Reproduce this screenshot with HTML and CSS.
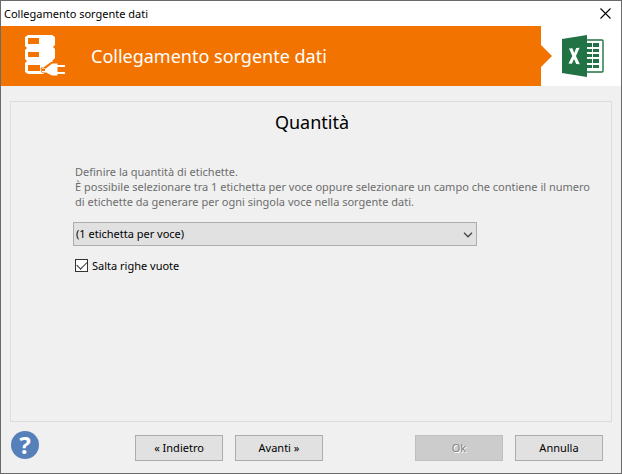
FILE: index.html
```
<!DOCTYPE html>
<html lang="it">
<head>
  <meta charset="UTF-8">
  <meta name="viewport" content="width=device-width, initial-scale=1.0">
  <title>Collegamento sorgente dati</title>
  <link rel="stylesheet" href="styles.css">
</head>
<body>

  <div class="window">
    <div class="titlebar">
      <span class="titlebar-text">Collegamento sorgente dati</span>
      <button class="close-button" type="button" aria-label="Chiudi">
        <svg width="11" height="11" viewBox="0 0 11 11">
          <path d="M0.5 0.5L10.5 10.5M10.5 0.5L0.5 10.5" stroke="#000" stroke-width="1.1" fill="none"/>
        </svg>
      </button>
    </div>

    <header class="banner">
      <div class="banner-title">
        <!-- database with plug -->
        <svg class="database-icon" width="42" height="44" viewBox="0 0 42 44">
          <path fill="#fff" d="M4 1H28L31 3V11L29 13L31 15V24L28 27L29 28H27L20 33V40H4L1 38V29L3 27L1 25V16L3 14L1 12V3Z"/>
          <path fill="#f27300" d="M4 4H15V10H4ZM4 18H15V23H4ZM4 31H16V37H4Z"/>
          <path fill="#fff" stroke="#f27300" stroke-width="1" d="M17 34H22L28 29H34V42H28L22 39H19Q17 39 17 34Z"/>
          <path fill="#f27300" d="M18 35H21V37H18Z"/>
          <path fill="#fff" d="M33 31H41V33H33ZM33 38H41V40H33Z"/>
        </svg>
        <h1>Collegamento sorgente dati</h1>
      </div>
      <div class="banner-source">
        <!-- Excel -->
        <svg width="42" height="42" viewBox="0 0 42 42">
          <rect x="22" y="5" width="19" height="32" rx="1" fill="#fff" stroke="#217346" stroke-width="1.4"/>
          <path fill="#217346" d="M25 8H30V12H25ZM31 8H37V12H31ZM25 14H30V17H25ZM31 14H37V17H31ZM25 19H30V22H25ZM31 19H37V22H31ZM25 24H30V28H25ZM31 24H37V28H31ZM25 30H30V33H25ZM31 30H37V33H31Z"/>
          <path fill="#217346" d="M0 4L25 0V42L0 38Z"/>
          <path fill="#fff" d="M7 13.5L10.4 13.3L12.2 18L14.2 13L17.6 12.8L14 21L17.8 29.3L14.2 29L12 24L9.9 28.7L6.5 28.5L10.3 21Z"/>
        </svg>
      </div>
    </header>

    <main class="panel">
      <h2>Quantità</h2>
      <p class="description">Definire la quantità di etichette.<br>
        È possibile selezionare tra 1 etichetta per voce oppure selezionare un campo che contiene il numero di etichette da generare per ogni singola voce nella sorgente dati.</p>
      <div class="select-box">
        <select id="quantity" aria-label="Quantità">
          <option>(1 etichetta per voce)</option>
        </select>
        <svg class="select-arrow" width="10" height="6" viewBox="0 0 10 6">
          <path d="M1 0.8L5 4.8L9 0.8" stroke="#444" stroke-width="1.3" fill="none"/>
        </svg>
      </div>
      <div class="check-row">
        <input type="checkbox" id="skipEmpty" checked>
        <label for="skipEmpty">Salta righe vuote</label>
      </div>
    </main>

    <footer class="footer">
      <button class="help-button" type="button" aria-label="Aiuto">?</button>
      <div class="button-group">
        <button class="btn" type="button">« Indietro</button>
        <button class="btn" type="button">Avanti »</button>
      </div>
      <div class="button-group">
        <button class="btn" type="button" disabled>Ok</button>
        <button class="btn" type="button">Annulla</button>
      </div>
    </footer>
  </div>

</body>
</html>
```

FILE: styles.css
```
* {
  box-sizing: border-box;
}

body {
  margin: 0;
  font-family: "Segoe UI", "Noto Sans", sans-serif;
  font-size: 11px;
  line-height: 15px;
  color: #000;
}

button, select, input {
  font: inherit;
  color: inherit;
}

.window {
  display: flex;
  flex-direction: column;
  min-height: 100vh;
  border: 1px solid #6b6a6b;
  background-color: #f0f0f0;
}

.titlebar {
  display: flex;
  justify-content: space-between;
  align-items: center;
  height: 25px;
  padding-left: 3px;
  background-color: #fff;
}

.close-button {
  display: flex;
  padding: 7px 10px;
  border: none;
  background: none;
}

.banner {
  display: flex;
  height: 60px;
  background-color: #fff;
}

.banner-title {
  position: relative;
  flex: 1;
  display: flex;
  align-items: center;
  gap: 25px;
  padding-left: 23px;
  background-color: #f27300;
}

.banner-title::after {
  content: "";
  position: absolute;
  left: 100%;
  top: 19px;
  border: 11px solid transparent;
  border-left-color: #f27300;
  border-right-width: 0;
}

.banner-title h1 {
  margin: 0;
  font-size: 18px;
  font-weight: 400;
  line-height: 24px;
  color: #fff;
}

.banner-source {
  display: flex;
  align-items: center;
  justify-content: flex-end;
  width: 80px;
  padding-right: 17px;
}

.panel {
  flex: 1;
  margin: 15px 9px 0;
  padding: 7px 12px 12px 62px;
  border: 1px solid #dcdcdc;
}

.panel h2 {
  margin: 0 0 29px -48px;
  font-size: 18px;
  font-weight: 400;
  line-height: 26px;
  text-align: center;
}

.description {
  margin: 0 0 13px;
  padding-left: 2px;
  color: #6d6d6d;
}

.select-box {
  position: relative;
  max-width: 404px;
}

.select-box select {
  appearance: none;
  width: 100%;
  height: 24px;
  padding: 0 24px 1px 2px;
  border: 1px solid #adadad;
  border-radius: 0;
  background-color: #e1e1e1;
}

.select-arrow {
  position: absolute;
  right: 4px;
  top: 10px;
  pointer-events: none;
}

.check-row {
  display: flex;
  align-items: center;
  gap: 4px;
  margin-top: 12px;
  padding-left: 2px;
}

.check-row input {
  appearance: none;
  width: 13px;
  height: 13px;
  margin: 0;
  border: 1px solid #333;
  background-color: #fff;
}

.check-row input:checked::before {
  content: "";
  display: block;
  width: 9px;
  height: 5px;
  margin: 2px 1px;
  border: solid #333;
  border-width: 0 0 1px 1px;
  transform: translateY(-1px) rotate(-45deg);
}

.footer {
  display: flex;
  align-items: center;
  padding: 9px 18px 12px 10px;
}

.help-button {
  align-self: flex-start;
  width: 28px;
  height: 28px;
  margin-right: 96px;
  padding: 0;
  border: none;
  border-radius: 50%;
  background-color: #5580b9;
  color: #fff;
  font-size: 24px;
  font-weight: 700;
  line-height: 28px;
}

.button-group {
  display: flex;
  gap: 12px;
  padding-top: 4px;
}

.button-group:last-child {
  margin-left: auto;
}

.btn {
  width: 88px;
  height: 26px;
  padding: 0 0 1px;
  border: 1px solid #adadad;
  background-color: #e1e1e1;
}

.btn:disabled {
  border-color: #bfbfbf;
  background-color: #ccc;
  color: #838383;
  text-shadow: 1px 1px 0 #fff;
}
```
